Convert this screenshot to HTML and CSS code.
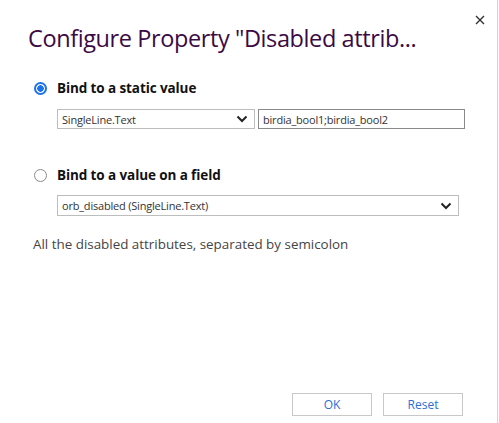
FILE: index.html
```html
<!DOCTYPE html>
<html>
<head>
<meta charset="utf-8">
<link rel="stylesheet" href="styles.css">
</head>
<body>
<div class="dialog">
  <div class="close" aria-label="Close">
    <svg width="10" height="10" viewBox="0 0 10 10"><path d="M1 1L9 9M9 1L1 9" stroke="#333" stroke-width="1.4"/></svg>
  </div>
  <h1 class="title">Configure Property "Disabled attrib...</h1>
  <div class="option">
    <span class="radio checked"></span>
    <span class="label">Bind to a static value</span>
  </div>
  <div class="row row-static">
    <div class="select sel-type"><span>SingleLine.Text</span><svg class="chev" width="12" height="8" viewBox="0 0 12 8"><path d="M1.5 1.5L6 6L10.5 1.5" fill="none" stroke="#222" stroke-width="2"/></svg></div>
    <div class="input">birdia_bool1;birdia_bool2</div>
  </div>
  <div class="option option2">
    <span class="radio"></span>
    <span class="label">Bind to a value on a field</span>
  </div>
  <div class="row row-field">
    <div class="select sel-field"><span>orb_disabled (SingleLine.Text)</span><svg class="chev" width="12" height="8" viewBox="0 0 12 8"><path d="M1.5 1.5L6 6L10.5 1.5" fill="none" stroke="#222" stroke-width="2"/></svg></div>
  </div>
  <p class="desc">All the disabled attributes, separated by semicolon</p>
  <div class="spacer"></div>
  <div class="buttons">
    <button class="btn">OK</button>
    <button class="btn">Reset</button>
  </div>
</div>
</body>
</html>
```
FILE: styles.css
```css
html, body {
  margin: 0;
  padding: 0;
  background: #fff;
}
body {
  font-family: "Open Sans", "Noto Sans", sans-serif;
  color: #222;
}
.dialog {
  position: relative;
  width: 498px;
  height: 423px;
  border-right: 1px solid #d4d4d4;
  box-sizing: border-box;
  display: flex;
  flex-direction: column;
}
.close {
  position: absolute;
  left: 475px;
  top: 15px;
  width: 10px;
  height: 10px;
  line-height: 0;
}
.title {
  margin: 22px 0 0 28px;
  font-weight: 400;
  font-size: 23.5px;
  line-height: 32px;
  color: #3b0a45;
  letter-spacing: -0.4px;
  white-space: nowrap;
}
.option {
  display: flex;
  align-items: center;
  margin: 25px 0 0 34px;
  height: 18px;
}
.option2 {
  margin-top: 37px;
}
.radio {
  width: 13px;
  height: 13px;
  border-radius: 50%;
  border: 1px solid #8a8a8a;
  box-sizing: border-box;
  margin-right: 10px;
  background: #fff;
}
.radio.checked {
  border: 2px solid #1a73e8;
  background: radial-gradient(circle, #1a73e8 0 3px, #fff 3.5px);
}
.label {
  font-weight: 700;
  font-size: 13.5px;
  color: #111;
  letter-spacing: -0.1px;
}
.row {
  display: flex;
  margin-left: 57px;
  gap: 3px;
}
.row-static {
  margin-top: 12px;
}
.row-field {
  margin-top: 11px;
}
.select, .input {
  box-sizing: border-box;
  height: 20px;
  border: 1px solid #bdbdbd;
  font-size: 11px;
  color: #333;
  display: flex;
  align-items: center;
  padding-left: 4px;
  white-space: nowrap;
  letter-spacing: -0.2px;
}
.select {
  justify-content: space-between;
  padding-right: 6px;
}
.sel-type {
  width: 198px;
}
.input {
  width: 207px;
  border-color: #8a8a8a;
}
.sel-field {
  width: 402px;
  height: 21px;
}
.chev {
  flex: none;
}
.desc {
  margin: 19px 0 0 33px;
  font-size: 13.4px;
  color: #444;
  letter-spacing: 0;
}
.spacer {
  flex: 1;
}
.buttons {
  display: flex;
  justify-content: flex-end;
  gap: 11px;
  padding-right: 34px;
  margin-bottom: 7px;
}
.btn {
  width: 80px;
  height: 23px;
  background: #fff;
  border: 1px solid #c8c8c8;
  color: #2b6fd6;
  font-family: "Open Sans", "Noto Sans", sans-serif;
  font-size: 12px;
  padding: 0;
}
```
